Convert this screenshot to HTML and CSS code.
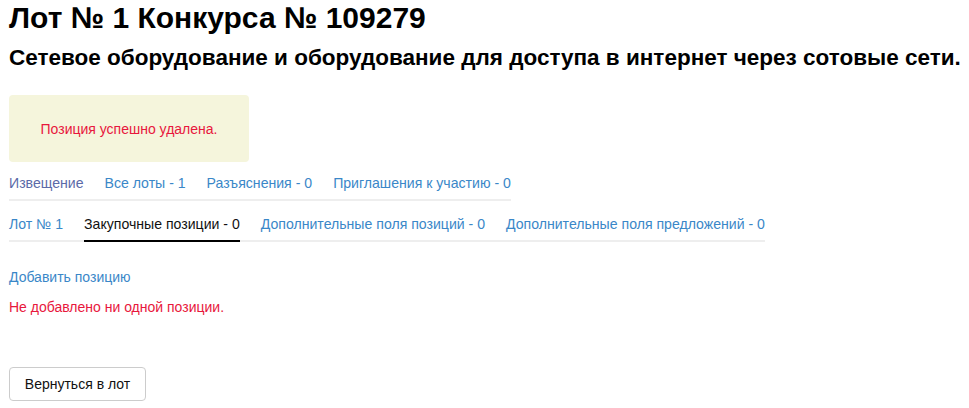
FILE: index.html
```html
<!DOCTYPE html>
<html lang="ru">
<head>
<meta charset="utf-8">
<title>Лот № 1 Конкурса № 109279</title>
<link rel="stylesheet" href="styles.css">
</head>
<body>
<div class="page">
  <h1 class="title">Лот № 1 Конкурса № 109279</h1>
  <h2 class="subtitle">Сетевое оборудование и оборудование для доступа в интернет через сотовые сети.</h2>
  <div class="alert">Позиция успешно удалена.</div>
  <nav class="tabs tabs-main">
    <a class="tab visited" href="#">Извещение</a>
    <a class="tab" href="#">Все лоты - 1</a>
    <a class="tab" href="#">Разъяснения - 0</a>
    <a class="tab" href="#">Приглашения к участию - 0</a>
  </nav>
  <nav class="tabs tabs-sub">
    <a class="tab" href="#">Лот № 1</a>
    <a class="tab active" href="#">Закупочные позиции - 0</a>
    <a class="tab" href="#">Дополнительные поля позиций - 0</a>
    <a class="tab" href="#">Дополнительные поля предложений - 0</a>
  </nav>
  <a class="add-link" href="#">Добавить позицию</a>
  <p class="empty">Не добавлено ни одной позиции.</p>
  <button class="btn" type="button">Вернуться в лот</button>
</div>
</body>
</html>
```

FILE: styles.css
```css
html, body {
  margin: 0;
  padding: 0;
  background: #fff;
}
body {
  font-family: "Liberation Sans", Arial, sans-serif;
  font-size: 14px;
  color: #333;
}
.page {
  padding: 0 9px;
  display: flex;
  flex-direction: column;
  align-items: flex-start;
}
.title {
  margin: 1px 0 0;
  font-size: 30px;
  line-height: 34px;
  font-weight: bold;
  color: #000;
}
.subtitle {
  margin: 10px 0 0;
  font-size: 22.5px;
  line-height: 26px;
  font-weight: bold;
  color: #000;
  white-space: nowrap;
}
.alert {
  margin-top: 24px;
  width: 240px;
  height: 67px;
  box-sizing: border-box;
  background: #f5f5dc;
  border-radius: 4px;
  color: #e8173c;
  font-size: 14px;
  display: flex;
  align-items: center;
  justify-content: center;
}
.tabs {
  display: flex;
  gap: 21px;
  border-bottom: 2px solid #eee;
}
.tabs-main {
  margin-top: 11px;
}
.tabs-sub {
  margin-top: 13px;
}
.tab {
  color: #3a87c8;
  text-decoration: none;
  font-size: 14.1px;
  line-height: 20px;
  padding: 0 0 6px;
  margin-bottom: -2px;
  border-bottom: 2px solid transparent;
}
.tab.visited {
  color: #5b6aa8;
}
.tab.active {
  color: #111;
  border-bottom-color: #000;
}
.add-link {
  margin-top: 25px;
  color: #3a87c8;
  text-decoration: none;
  font-size: 14px;
  line-height: 20px;
}
.empty {
  margin: 10px 0 0;
  color: #e8173c;
  font-size: 14px;
  line-height: 20px;
}
.btn {
  margin-top: 50px;
  width: 137px;
  height: 34px;
  border: 1px solid #ccc;
  border-radius: 4px;
  background: #fff;
  color: #111;
  font-family: "Liberation Sans", Arial, sans-serif;
  font-size: 14px;
  padding: 0;
}
```
